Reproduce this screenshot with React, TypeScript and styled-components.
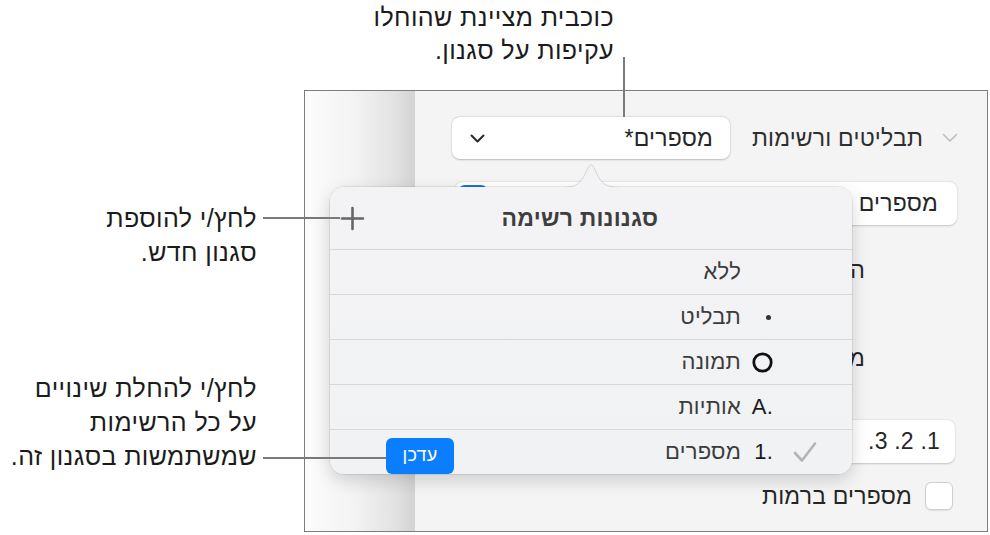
import React from "react";
import styled, { createGlobalStyle } from "styled-components";

const Global = createGlobalStyle`
  html, body { margin: 0; padding: 0; background: #ffffff; }
  body {
    font-family: "Liberation Sans", "DejaVu Sans", Arial, sans-serif;
    overflow: hidden;
  }
  * { box-sizing: border-box; }
`;

const Page = styled.div`
  position: relative;
  width: 990px;
  height: 535px;
  display: grid;
  grid-template-columns: 304px 1fr;
  grid-template-rows: 90px 1fr;
  background: #ffffff;
`;

const TopNote = styled.div`
  grid-column: 2;
  grid-row: 1;
  direction: rtl;
  text-align: right;
  padding: 1px 376px 0 0;
  font-size: 25px;
  letter-spacing: 0.4px;
  line-height: 33px;
  color: #1b1b1b;
`;

const LeftNotes = styled.div`
  grid-column: 1;
  grid-row: 2;
  direction: rtl;
  display: flex;
  flex-direction: column;
  padding-right: 47px;
`;

const Note = styled.div<{ $top: number }>`
  margin-top: ${(p) => p.$top}px;
  font-size: 25px;
  letter-spacing: 0.4px;
  line-height: 34px;
  color: #1b1b1b;
  text-align: right;
`;

const Leader = styled.div<{ $x: number; $y: number; $w: number; $h: number }>`
  position: absolute;
  left: ${(p) => p.$x}px;
  top: ${(p) => p.$y}px;
  width: ${(p) => p.$w}px;
  height: ${(p) => p.$h}px;
  background: #7a7a7a;
  z-index: 5;
`;

const Frame = styled.div`
  grid-column: 2;
  grid-row: 2;
  margin: 0 2px 3px 0;
  border: 1px solid #7d7d7d;
  position: relative;
  display: flex;
  overflow: hidden;
`;

const DocArea = styled.div`
  width: 110px;
  flex: none;
  background: linear-gradient(90deg, #fcfcfc 0%, #f3f3f3 45%, #e3e3e3 80%, #d3d3d3 100%);
`;

const Sidebar = styled.div`
  flex: 1;
  direction: rtl;
  background: #f4f4f4;
  display: flex;
  flex-direction: column;
  padding: 26px 0 0 0;
  color: #2b2b2b;
  font-size: 23px;
  letter-spacing: 0.2px;
`;

const SectionRow = styled.div`
  display: flex;
  align-items: center;
  height: 42px;
  padding: 0 29px 0 37px;
`;

const Disclosure = styled.svg`
  width: 16px;
  height: 10px;
  flex: none;
`;

const SectionTitle = styled.div`
  margin-right: 19px;
  color: #2e2e2e;
`;

const PopupButton = styled.div`
  margin-right: auto;
  width: 278px;
  height: 42px;
  background: #ffffff;
  border-radius: 8px;
  box-shadow: 0 0.5px 2px rgba(0, 0, 0, 0.22), 0 0 0 0.5px rgba(0, 0, 0, 0.06);
  display: flex;
  align-items: center;
  justify-content: space-between;
  padding: 0 17px 0 18px;
  color: #262626;
`;

const ChevronDown = styled.svg`
  width: 15px;
  height: 9px;
`;

const StyleRow = styled.div`
  margin: 23px 30px 0 40px;
  height: 43px;
  background: #ffffff;
  border-radius: 8px;
  box-shadow: 0 0.5px 2px rgba(0, 0, 0, 0.2);
  display: flex;
  align-items: center;
  justify-content: space-between;
  padding: 0 19px 0 3px;
  color: #262626;
`;

const BlueToggle = styled.div`
  align-self: flex-start;
  margin-top: 3px;
  width: 30px;
  height: 30px;
  border-radius: 7px;
  background: #1a73e8;
`;

const Label = styled.div<{ $top: number }>`
  margin-top: ${(p) => p.$top}px;
  height: 40px;
  line-height: 40px;
  padding-right: 122px;
  color: #262626;
`;

const FieldBox = styled.div`
  margin: 42px 32px 0 285px;
  height: 43px;
  background: #ffffff;
  border-radius: 8px;
  box-shadow: 0 0.5px 2px rgba(0, 0, 0, 0.2);
  display: flex;
  align-items: center;
  padding-right: 15px;
  color: #262626;
`;

const CheckRow = styled.div`
  margin-top: 19px;
  display: flex;
  align-items: center;
  padding-right: 34px;
  gap: 13px;
  color: #262626;
`;

const Checkbox = styled.div`
  width: 28px;
  height: 28px;
  border-radius: 6px;
  background: #ffffff;
  border: 1px solid #cfcfcf;
  box-shadow: 0 0.5px 1px rgba(0, 0, 0, 0.08);
`;

const Popover = styled.div`
  position: absolute;
  left: 25px;
  top: 96px;
  width: 522px;
  border-radius: 14px;
  background: linear-gradient(180deg, #f3f3f5 0%, #f1f2f4 100%);
  box-shadow: 0 6px 18px rgba(0, 0, 0, 0.16), 0 0 0 0.5px rgba(0, 0, 0, 0.14);
  z-index: 3;
  letter-spacing: 0.2px;
`;

const Arrow = styled.svg`
  position: absolute;
  left: 233px;
  top: -24px;
  width: 56px;
  height: 25px;
  overflow: visible;
`;

const PopHeader = styled.div`
  height: 62px;
  display: flex;
  align-items: center;
  padding-left: 10px;
`;

const PlusIcon = styled.svg`
  width: 25px;
  height: 25px;
  flex: none;
`;

const PopTitle = styled.div`
  flex: 1;
  text-align: center;
  padding-right: 57px;
  direction: rtl;
  font-size: 23px;
  font-weight: bold;
  color: #3e3e3e;
`;

const PopRow = styled.div`
  direction: rtl;
  height: 45px;
  border-top: 1px solid #d7d7da;
  display: flex;
  align-items: center;
  padding: 0 35px 0 56px;
  &:first-of-type {
    height: 46px;
  }
`;

const CheckSlot = styled.div`
  width: 24px;
  height: 24px;
  flex: none;
  display: flex;
  align-items: center;
  justify-content: center;
`;

const MarkerSlot = styled.div`
  width: 24px;
  margin-right: 20px;
  flex: none;
  display: flex;
  justify-content: flex-start;
  align-items: center;
  font-size: 22px;
  color: #1a1a1a;
`;

const MarkerText = styled.span`
  direction: ltr;
  unicode-bidi: isolate;
`;

const BulletDot = styled.span`
  width: 5px;
  height: 5px;
  border-radius: 50%;
  background: #333333;
  margin-right: 2px;
`;

const RowLabel = styled.div`
  margin-right: 8px;
  font-size: 22px;
  color: #3c3c3c;
`;

const UpdateButton = styled.div`
  margin-right: auto;
  width: 68px;
  height: 36px;
  border-radius: 6px;
  background: #0b7eff;
  color: #ffffff;
  font-size: 18px;
  display: flex;
  align-items: center;
  justify-content: center;
  margin-top: 7px;
`;

type Marker = "bullet" | "image" | string | undefined;

const rows: { label: string; marker?: Marker; checked?: boolean; update?: boolean }[] = [
  { label: "ללא" },
  { label: "תבליט", marker: "bullet" },
  { label: "תמונה", marker: "image" },
  { label: "אותיות", marker: "A." },
  { label: "מספרים", marker: "1.", checked: true, update: true },
];

function renderMarker(m: Marker) {
  if (!m) return null;
  if (m === "bullet") return <BulletDot />;
  if (m === "image")
    return (
      <svg width="21" height="21" viewBox="0 0 21 21">
        <circle cx="10.5" cy="10.5" r="8.7" fill="none" stroke="#111" strokeWidth="2.8" />
      </svg>
    );
  return <MarkerText>{m}</MarkerText>;
}

export default function App() {
  return (
    <>
      <Global />
      <Page>
        <TopNote>
          כוכבית מציינת שהוחלו
          <br />
          עקיפות על סגנון.
        </TopNote>

        <LeftNotes>
          <Note $top={111}>
            לחץ/י להוספת
            <br />
            סגנון חדש.
          </Note>
          <Note $top={102}>
            לחץ/י להחלת שינויים
            <br />
            על כל הרשימות
            <br />
            שמשתמשות בסגנון זה.
          </Note>
        </LeftNotes>

        <Frame>
          <DocArea />
          <Sidebar>
            <SectionRow>
              <Disclosure viewBox="0 0 16 10">
                <path d="M1.5 1.5 L8 8 L14.5 1.5" fill="none" stroke="#bdbdbd" strokeWidth="1.6" strokeLinecap="round" strokeLinejoin="round" />
              </Disclosure>
              <SectionTitle>תבליטים ורשימות</SectionTitle>
              <PopupButton>
                <span>מספרים*</span>
                <ChevronDown viewBox="0 0 15 9">
                  <path d="M1.5 1.5 L7.5 7.5 L13.5 1.5" fill="none" stroke="#2a2a2a" strokeWidth="2" strokeLinecap="round" strokeLinejoin="round" />
                </ChevronDown>
              </PopupButton>
            </SectionRow>

            <StyleRow>
              <span>מספרים ותבליטים</span>
              <BlueToggle />
            </StyleRow>

            <Label $top={25}>הזחת תבליט</Label>
            <Label $top={48}>מיקום טקסט</Label>

            <FieldBox>1. 2. 3.</FieldBox>

            <CheckRow>
              <Checkbox />
              <span>מספרים ברמות</span>
            </CheckRow>
          </Sidebar>

          <Popover>
            <Arrow viewBox="0 0 56 25">
              <path
                d="M0 24.5 C11 24.5 16 21 20 15 L25.5 4 Q28 -0.5 30.5 4 L36 15 C40 21 45 24.5 56 24.5"
                fill="#f3f3f5"
                stroke="rgba(0,0,0,0.16)"
                strokeWidth="0.8"
              />
              <rect x="0" y="24.2" width="56" height="2" fill="#f3f3f5" />
            </Arrow>
            <PopHeader>
              <PlusIcon viewBox="0 0 25 25">
                <path d="M12.5 2 V23 M2 12.5 H23" stroke="#666" strokeWidth="2.6" strokeLinecap="round" />
              </PlusIcon>
              <PopTitle>סגנונות רשימה</PopTitle>
            </PopHeader>
            {rows.map((r) => (
              <PopRow key={r.label}>
                <CheckSlot>
                  {r.checked && (
                    <svg width="24" height="22" viewBox="0 0 24 22">
                      <path d="M2 12 L9 19.5 L22 2.5" fill="none" stroke="#b4b4b4" strokeWidth="2.6" strokeLinecap="round" strokeLinejoin="round" />
                    </svg>
                  )}
                </CheckSlot>
                <MarkerSlot>{renderMarker(r.marker)}</MarkerSlot>
                <RowLabel>{r.label}</RowLabel>
                {r.update && <UpdateButton>עדכן</UpdateButton>}
              </PopRow>
            ))}
          </Popover>
        </Frame>

        <Leader $x={623} $y={57} $w={1.5} $h={60} />
        <Leader $x={263} $y={217} $w={77} $h={1.5} />
        <Leader $x={263} $y={457} $w={123} $h={1.5} />
      </Page>
    </>
  );
}
